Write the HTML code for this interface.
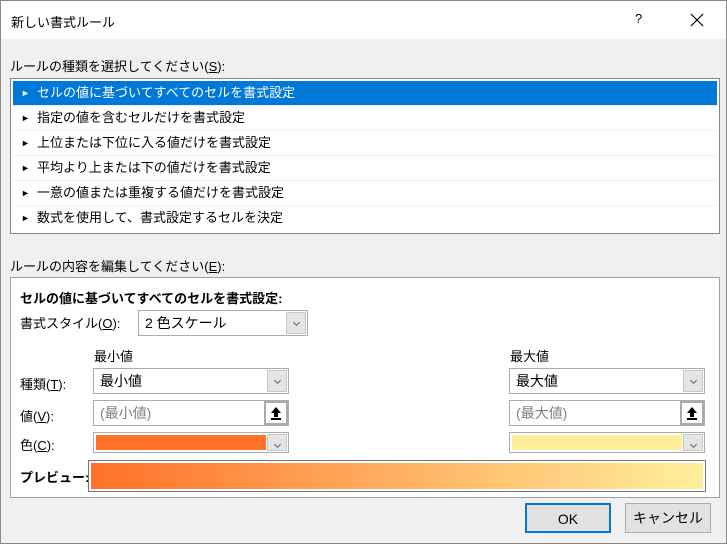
<!DOCTYPE html><html><head><meta charset="utf-8"><style>
*{box-sizing:border-box;margin:0;padding:0}
body{width:727px;height:544px;background:#f0f0f0;font-family:"Liberation Sans","Noto Sans CJK JP",sans-serif;font-size:13px;color:#000;position:relative;overflow:hidden;border:1px solid #888}
.a{position:absolute;white-space:nowrap}
.title{left:0;top:0;width:725px;height:38px;background:#fff}
.list{left:9px;top:77px;width:710px;height:156px;background:#fff;border:1px solid #828790}
.it{position:absolute;left:2px;width:704px;height:25px;line-height:24px;padding-left:8px;border-bottom:1px solid #f0f0f0}
.it b{font-weight:normal;font-size:9px;display:inline-block;width:16px;vertical-align:1px}
.sel{background:#0078d7;color:#fff}
.panel{left:9px;top:276px;width:710px;height:221px;background:#fff;border:1px solid #a0a0a0}
.cb{position:absolute;background:#fff;border:1px solid #ababab;height:26px;line-height:24px;padding-left:6px;font-size:14px}
.dd{position:absolute;right:1px;top:1px;width:20px;height:22px;background:#e5e5e5;border:1px solid #c8c8c8}
.dd:after{content:"";position:absolute;left:7px;top:7px;width:4px;height:4px;border-right:1px solid #666;border-bottom:1px solid #666;transform:rotate(45deg)}
.up{position:absolute;right:0;top:0;width:24px;height:24px;background:#fff;border:2px solid #aaa}
.btn{position:absolute;height:30px;background:#e1e1e1;border:1px solid #adadad;text-align:center;line-height:28px;font-size:14px}
u{text-decoration:underline}
</style></head><body>
<div class="a title"></div>
<div class="a" style="left:10px;top:11px">新しい書式ルール</div>
<div class="a" style="left:634px;top:10px">?</div>
<svg class="a" style="left:689px;top:12px" width="14" height="14"><path d="M1 1L13 13M13 1L1 13" stroke="#000" stroke-width="1.2"/></svg>
<div class="a" style="left:9px;top:55px">ルールの種類を選択してください(<u>S</u>):</div>
<div class="a list">
<div class="it sel" style="top:2px"><b>►</b>セルの値に基づいてすべてのセルを書式設定</div>
<div class="it" style="top:27px"><b>►</b>指定の値を含むセルだけを書式設定</div>
<div class="it" style="top:52px"><b>►</b>上位または下位に入る値だけを書式設定</div>
<div class="it" style="top:77px"><b>►</b>平均より上または下の値だけを書式設定</div>
<div class="it" style="top:102px"><b>►</b>一意の値または重複する値だけを書式設定</div>
<div class="it" style="top:127px;border:0"><b>►</b>数式を使用して、書式設定するセルを決定</div>
</div>
<div class="a" style="left:9px;top:255px">ルールの内容を編集してください(<u>E</u>):</div>
<div class="a panel"></div>
<div class="a" style="left:19px;top:287px;font-weight:bold">セルの値に基づいてすべてのセルを書式設定:</div>
<div class="a" style="left:19px;top:312px">書式スタイル(<u>O</u>):</div>
<div class="cb" style="left:137px;top:309px;width:170px">2 色スケール<div class="dd"></div></div>
<div class="a" style="left:93px;top:345px">最小値</div>
<div class="a" style="left:509px;top:345px">最大値</div>
<div class="a" style="left:19px;top:373px">種類(<u>T</u>):</div>
<div class="a" style="left:19px;top:405px">値(<u>V</u>):</div>
<div class="a" style="left:19px;top:434px">色(<u>C</u>):</div>
<div class="cb" style="left:92px;top:367px;width:196px">最小値<div class="dd"></div></div>
<div class="cb" style="left:92px;top:399px;width:196px;color:#808080">(最小値)<div class="up"><svg width="20" height="20"><path d="M10 4L5 10H8V14H12V10H15Z" fill="#000"/><rect x="5" y="15" width="10" height="2" fill="#000"/></svg></div></div>
<div class="cb" style="left:92px;top:431px;width:196px;height:21px;padding:2px"><div style="width:170px;height:15px;background:#ff7128"></div><div class="dd" style="height:17px"></div></div>
<div class="cb" style="left:508px;top:367px;width:196px">最大値<div class="dd"></div></div>
<div class="cb" style="left:508px;top:399px;width:196px;color:#808080">(最大値)<div class="up"><svg width="20" height="20"><path d="M10 4L5 10H8V14H12V10H15Z" fill="#000"/><rect x="5" y="15" width="10" height="2" fill="#000"/></svg></div></div>
<div class="cb" style="left:508px;top:431px;width:196px;height:21px;padding:2px"><div style="width:170px;height:15px;background:#ffef9c"></div><div class="dd" style="height:17px"></div></div>
<div class="a" style="left:19px;top:466px;font-weight:bold">プレビュー:</div>
<div class="a" style="left:87px;top:459px;width:618px;height:32px;border:1px solid #777;padding:2px;background:#fff"><div style="width:100%;height:100%;background:linear-gradient(to right,#ff7128,#ffef9c)"></div></div>
<div class="btn" style="left:524px;top:502px;width:86px;border:2px solid #0078d7">OK</div>
<div class="btn" style="left:624px;top:502px;width:86px">キャンセル</div>
</body></html>
